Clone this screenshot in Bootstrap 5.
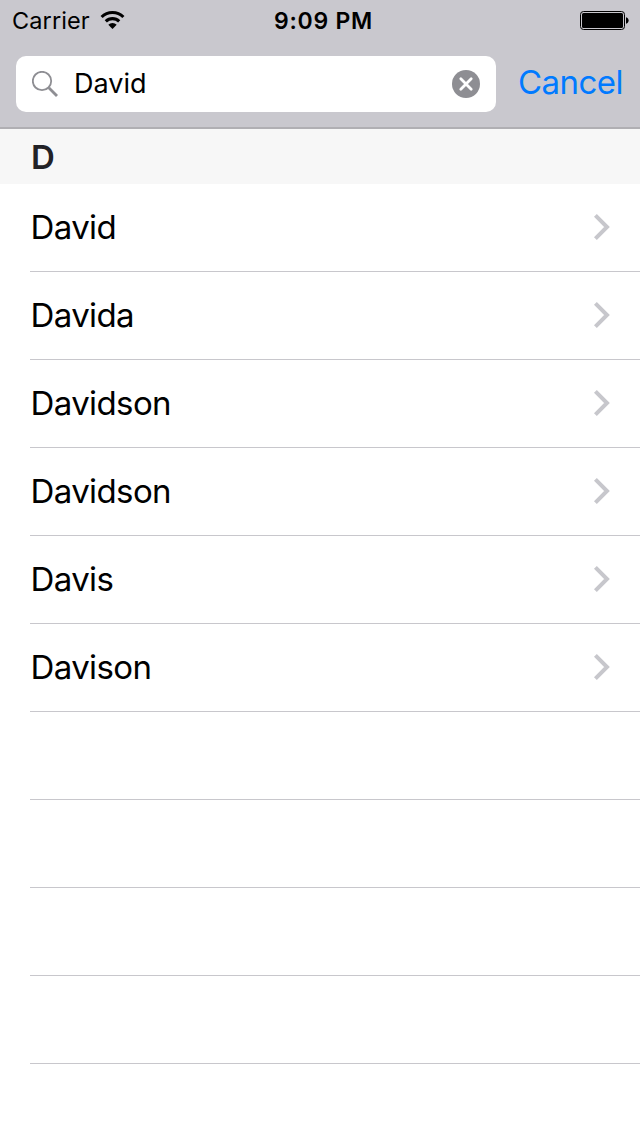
<!DOCTYPE html>
<html lang="en">
<head>
<meta charset="utf-8">
<meta name="viewport" content="width=device-width, initial-scale=1">
<title>Contacts</title>
<link href="https://cdn.jsdelivr.net/npm/bootstrap@5.3.0/dist/css/bootstrap.min.css" rel="stylesheet">
<style>
body{font-family:Inter,"Liberation Sans",sans-serif;color:#000;background:#fff;height:1136px;overflow:hidden}
.top-area{background:#c9c8ce;height:129px;border-bottom:2px solid #b0afb3}
.status-bar{height:40px;padding:0 11px 0 12px;font-size:23.5px}
.status-side{flex:1 1 0}
.carrier{letter-spacing:.1px;line-height:38px;padding-top:2px}
.wifi-icon{margin-left:9px}
.clock{font-weight:600;font-size:23px;letter-spacing:.75px;line-height:38px;padding:2px 0 0 6px}
.search-row{padding:16px 16px 0}
.search-box{width:480px;height:56px;border-radius:10px;padding:0 15px 0 16px}
.search-box input{font-size:27px;line-height:56px;height:56px;letter-spacing:0;color:#000;outline:0;min-width:0;margin-left:15px}
.cancel-btn{color:#007aff;font-size:33px;line-height:52px;height:52px;margin-left:22px;letter-spacing:-.55px}
.section-head{height:55px;background:#f7f7f7;color:#222226;font-size:33px;font-weight:600;line-height:56px;padding-left:31px}
.contact-row{height:88px;margin-left:30px;padding:0 29px 0 .5px;border:0;border-bottom:1px solid #c8c7cc !important;font-size:33px;letter-spacing:-.6px;background:#fff;color:#000}
.contact-row svg{margin-bottom:1px}
</style>
</head>
<body>
<header class="top-area">
  <div class="status-bar d-flex align-items-center">
    <div class="status-side d-flex align-items-center">
      <span class="carrier">Carrier</span>
      <svg class="wifi-icon" width="30" height="24" viewBox="0 0 30 24" fill="none" stroke="#000"><path d="M2.6 9a15.6 15.6 0 0 1 21.8 0" stroke-width="3.1"/><path d="M6.8 13.3a9.6 9.6 0 0 1 13.4 0" stroke-width="3.1"/><path d="M9.3 16.8a6 6 0 0 1 8.4 0L13.5 21z" fill="#000" stroke="none"/></svg>
    </div>
    <span class="clock">9:09 PM</span>
    <div class="status-side d-flex justify-content-end">
      <svg width="49" height="20" viewBox="0 0 49 20"><g transform="translate(0 1)"><rect x=".5" y=".5" width="44" height="18" rx="3" fill="none" stroke="#000"/><rect x="2" y="2" width="41" height="15" rx="1.5"/><path d="M46 6.2c3.5.8 3.5 5.8 0 6.6z"/></g></svg>
    </div>
  </div>
  <div class="search-row d-flex">
    <div class="search-box d-flex align-items-center bg-white">
      <svg class="flex-shrink-0" width="27" height="27" viewBox="0 0 27 27" fill="none" stroke="#8e8e93"><circle cx="10" cy="10" r="9.2" stroke-width="1.8"/><path d="M16.8 16.8L25 25" stroke-width="2.8"/></svg>
      <input class="border-0 bg-transparent p-0 flex-grow-1" type="text" value="David" aria-label="Search">
      <svg class="flex-shrink-0" width="30" height="30" viewBox="0 0 30 30"><circle cx="15" cy="15" r="14" fill="#8e8e93"/><path d="M9.8 9.8l10.4 10.4M20.2 9.8L9.8 20.2" stroke="#fff" stroke-width="2.8" stroke-linecap="round"/></svg>
    </div>
    <button class="cancel-btn border-0 bg-transparent p-0" type="button">Cancel</button>
  </div>
</header>
<main>
  <div class="section-head">D</div>
  <div class="list-group list-group-flush" id="contacts"></div>
</main>
<script src="https://cdn.jsdelivr.net/npm/bootstrap@5.3.0/dist/js/bootstrap.bundle.min.js"></script>
<script>
const names = ["David","Davida","Davidson","Davidson","Davis","Davison","","","",""];
const chevron = '<svg width="18" height="28" viewBox="0 0 18 28" fill="none" stroke="#c7c7cc" stroke-width="4"><path d="M2.4 2.4L14 14L2.4 25.6"/></svg>';
document.getElementById("contacts").innerHTML = names.map(n =>
  '<div class="contact-row list-group-item d-flex align-items-center justify-content-between">' +
  (n ? '<span>' + n + '</span>' + chevron : '') + '</div>').join("");
</script>
</body>
</html>
